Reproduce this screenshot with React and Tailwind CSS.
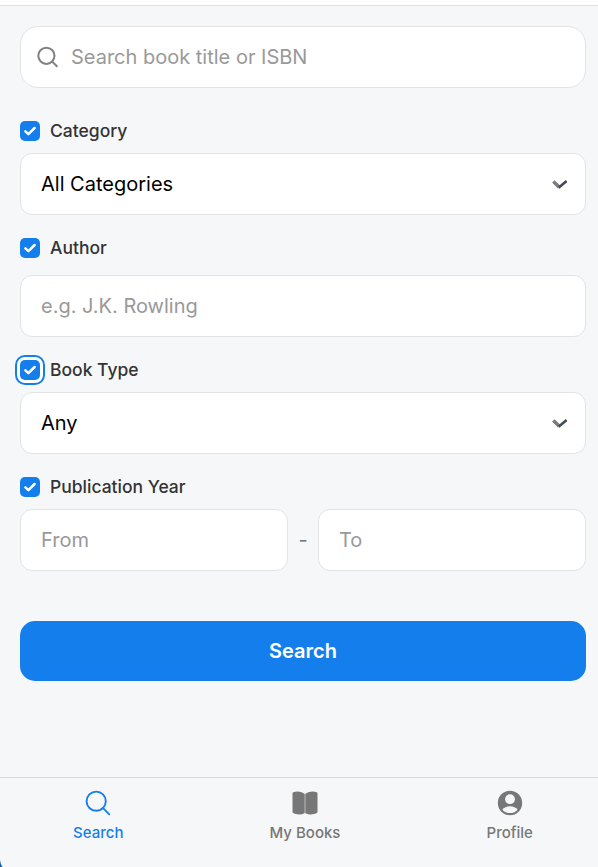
function Checkbox({ focused = false }) {
  return (
    <span
      className={`flex h-5 w-5 shrink-0 items-center justify-center rounded-[5px] bg-[#147eed] ${
        focused ? "outline-2 outline-offset-3 outline-[#147eed] ring-[3px] ring-white" : ""
      }`}
    >
      <svg width="20" height="20" viewBox="0 0 20 20" fill="none">
        <path d="M5.4 10.4 8.4 13.2 14.6 7" stroke="#fff" strokeWidth="2.5" strokeLinecap="round" strokeLinejoin="round" />
      </svg>
    </span>
  );
}

function FieldLabel({ children, focused = false }) {
  return (
    <div className="flex h-6 items-center gap-2.5 text-[17.5px] font-medium text-[#333]">
      <Checkbox focused={focused} />
      <span>{children}</span>
    </div>
  );
}

function Chevron() {
  return (
    <svg className="mt-0.5" width="16" height="10" viewBox="0 0 16 10" fill="none">
      <path d="M1.4 1.4 7.2 7" stroke="#7a7e83" strokeWidth="3.4" />
      <path d="M6.6 7.8 14.6 1" stroke="#444a53" strokeWidth="2.5" />
      <path d="M1 2.2 6.6 8" stroke="#7d7d7d" strokeWidth="1.5" />
    </svg>
  );
}

const fieldClass = "h-[62px] w-full rounded-[12px] border border-[#e2e3e5] bg-white px-5 text-xl";

function Select({ value }) {
  return (
    <div className={`${fieldClass} flex items-center justify-between pr-[17px] text-black`}>
      <span>{value}</span>
      <Chevron />
    </div>
  );
}

function TextField({ placeholder }) {
  return (
    <input className={`${fieldClass} min-w-0 placeholder:text-[#999] placeholder:opacity-100`} placeholder={placeholder} />
  );
}

function Tab({ icon, label, active = false }) {
  return (
    <div className={`flex flex-col items-center ${active ? "text-[#147eed]" : "text-[#777]"}`}>
      <div className="h-[30px]">{icon}</div>
      <span className="mt-[5px] text-[15px] leading-5 font-medium">{label}</span>
    </div>
  );
}

export default function App() {
  return (
    <div className="relative h-[867px] w-[598px] overflow-hidden bg-[#f6f7f9] font-['Inter',sans-serif]">
      <div className="flex h-full w-[606px] flex-col">
        <header className="h-1.5 shrink-0 border-b border-[#e0e1e3] bg-white" />

        <main className="flex flex-1 flex-col px-5 pt-5">
          <div className="flex h-[62px] items-center gap-3 rounded-[18px] border border-[#e2e3e5] bg-white px-4">
            <svg width="22" height="22" viewBox="0 0 22 22" fill="none" stroke="#808080" strokeWidth="2">
              <circle cx="9.4" cy="9.8" r="8.1" />
              <path d="m15 15.4 5.4 5.4" />
            </svg>
            <input
              className="min-w-0 flex-1 text-xl placeholder:text-[#999] placeholder:opacity-100"
              placeholder="Search book title or ISBN"
            />
          </div>

          <section className="mt-[31px] flex flex-col gap-[10px]">
            <FieldLabel>Category</FieldLabel>
            <Select value="All Categories" />
          </section>

          <section className="mt-[21px] flex flex-col gap-[15px]">
            <FieldLabel>Author</FieldLabel>
            <TextField placeholder="e.g. J.K. Rowling" />
          </section>

          <section className="mt-[21px] flex flex-col gap-[10px]">
            <FieldLabel focused>Book Type</FieldLabel>
            <Select value="Any" />
          </section>

          <section className="mt-[21px] flex flex-col gap-[10px]">
            <FieldLabel>Publication Year</FieldLabel>
            <div className="flex items-center">
              <TextField placeholder="From" />
              <span className="w-[30px] shrink-0 text-center text-xl text-[#777]">-</span>
              <TextField placeholder="To" />
            </div>
          </section>

          <button className="mt-[50px] h-[60px] w-full rounded-[15px] bg-[#147eed] text-xl font-semibold text-white">
            Search
          </button>
        </main>

        <nav className="flex h-[90px] shrink-0 justify-around border-t border-[#dadbdd] pt-2.5">
          <Tab
            active
            label="Search"
            icon={
              <svg width="30" height="30" viewBox="0 0 30 30" fill="none" stroke="currentColor" strokeWidth="1.9" strokeLinecap="round">
                <circle cx="13.2" cy="13.2" r="9.6" />
                <path d="m20.1 20.1 6.2 6.2" />
              </svg>
            }
          />
          <Tab
            label="My Books"
            icon={
              <svg width="30" height="30" viewBox="0 0 30 30" fill="currentColor">
                <rect x="14" y="5.8" width="2" height="19.4" fill="#b0b0b1" />
                <path d="M2.5 5.2Q2.5 4.5 3.3 4.2C7 3.1 11 3.5 14.4 5.8V25.2C11.4 26.8 6.8 27 3.3 25Q2.5 24.6 2.5 23.8Z" />
                <path d="M27.5 5.2Q27.5 4.5 26.7 4.2C23 3.1 19 3.5 15.6 5.8V25.2C18.6 26.8 23.2 27 26.7 25Q27.5 24.6 27.5 23.8Z" />
              </svg>
            }
          />
          <Tab
            label="Profile"
            icon={
              <svg width="30" height="30" viewBox="0 0 30 30" fill="none">
                <circle cx="15" cy="15" r="12.2" fill="currentColor" />
                <circle cx="15" cy="11.2" r="4.9" fill="#f6f7f9" />
                <path d="M7.4 21.7c1.5-2.2 4.4-3.4 7.6-3.4s6.1 1.2 7.6 3.4c-1.9 2.1-4.6 3.4-7.6 3.4s-5.7-1.3-7.6-3.4Z" fill="#f6f7f9" />
              </svg>
            }
          />
        </nav>
      </div>
      <svg className="absolute bottom-0 left-0" width="3" height="7" viewBox="0 0 3 7">
        <path d="M0 0Q.4 4 2.5 7H0Z" fill="#15609f" />
      </svg>
    </div>
  );
}
